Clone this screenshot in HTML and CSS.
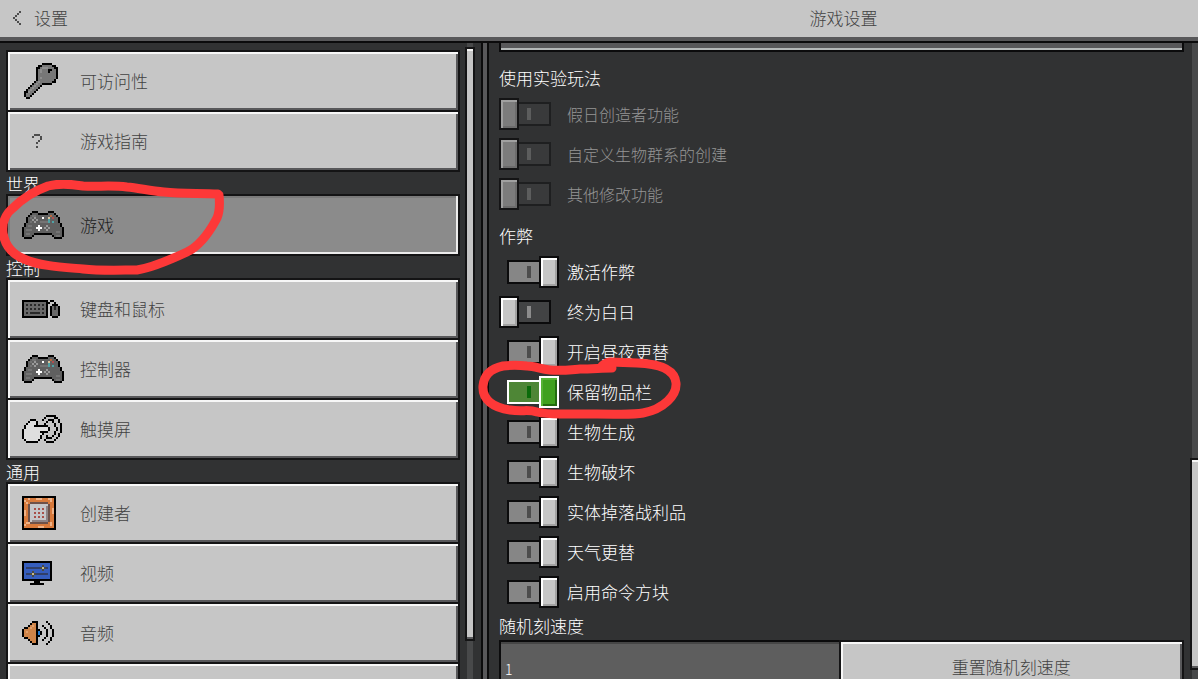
FILE: index.html
```html
<!DOCTYPE html>
<html lang="zh-CN">
<head>
<meta charset="utf-8">
<meta name="viewport" content="width=device-width, initial-scale=1">
<title>游戏设置</title>
<link rel="stylesheet" href="styles.css">
</head>
<body>
<svg class="symbols" aria-hidden="true">
  <symbol id="pad" viewBox="0 -0.5 21 14">
    <path stroke="#606060" d="M5 1h3M13 1h3M4 2h13M3 3h15M3 4h15M3 5h15M2 6h17M2 7h17M1 8h19M1 9h19M1 10h19M1 11h5M15 11h5M1 12h4M16 12h4"/>
    <path stroke="#747474" d="M5 2h2M4 3h1M4 5h1M3 7h2M2 9h3M2 11h2M17 10h2M17 12h2M9 5h4"/>
    <path stroke="#000" d="M5 0h3M13 0h3M4 1h1M8 1h5M16 1h1M3 2h1M17 2h1M2 3h1M18 3h1M2 4h1M18 4h1M2 5h1M18 5h1M1 6h1M19 6h1M1 7h1M19 7h1M0 8h1M20 8h1M0 9h1M20 9h1M0 10h1M20 10h1M0 11h1M6 11h9M20 11h1M0 12h1M5 12h1M15 12h1M20 12h1M1 13h4M16 13h4"/>
    <path stroke="#9a9a9a" d="M6 3h1M5 4h1M7 4h1M6 5h1M12 7h1M11 8h1M13 8h1M12 9h1"/>
    <path stroke="#fff" d="M10 3h1M8 7h1M7 8h3M8 9h1"/>
    <path stroke="#d9c39a" d="M13 3h1"/><path stroke="#b7683e" d="M14 2h1"/><path stroke="#4fa3a6" d="M13 4h1M15 5h1M13 5h1"/><path stroke="#b34c4c" d="M15 3h1"/>
  </symbol>
</svg>

<header class="topbar">
  <button class="back" type="button">
    <svg class="pixel" width="10" height="14" viewBox="0 -0.5 5 7" aria-hidden="true"><path stroke="#4c4c4c" d="M3 0h1M2 1h1M1 2h1M0 3h1M1 4h1M2 5h1M3 6h1"/></svg>
    <span>设置</span>
  </button>
  <h1 class="title">游戏设置</h1>
</header>

<main class="screen">
  <div class="side">
    <nav class="menu" aria-label="设置">
      <button class="item" type="button"><span class="icon"><svg class="pixel" width="38" height="36" viewBox="-1 -0.5 19 18">
        <path stroke="#777" d="M9 1h5M8 2h7M7 3h9M7 4h9M7 5h9M7 6h9M7 7h9M7 8h8M6 9h8M5 10h4M4 11h4M3 12h4M2 13h4M2 14h3M1 15h3M1 16h2"/>
        <path stroke="#8e8e8e" d="M9 2h3M8 3h1M8 4h1M8 7h1M7 9h1M6 10h1M5 11h1M4 12h1M3 13h1M2 14h1"/>
        <path stroke="#000" d="M9 0h5M7 1h2M14 1h2M6 2h2M15 2h2M6 3h1M12 3h2M16 3h1M6 4h1M12 4h1M16 4h1M6 5h1M16 5h1M6 6h1M16 6h1M6 7h1M16 7h1M6 8h1M15 8h1M5 9h1M14 9h2M4 10h1M9 10h5M3 11h1M8 11h1M2 12h1M7 12h1M1 13h1M6 13h1M0 14h2M5 14h1M0 15h1M4 15h1M0 16h1M3 16h1M1 17h2"/>
      </svg></span>可访问性</button>
      <button class="item" type="button"><span class="icon"><svg class="pixel mark" width="10" height="14" viewBox="0 -0.5 5 7"><path stroke="#4c4c4c" d="M1 0h3M0 1h1M4 1h1M4 2h1M3 3h1M2 4h1M2 6h1"/></svg></span>游戏指南</button>
      <h2 class="group">世界</h2>
      <button class="item selected" type="button" aria-current="page"><span class="icon"><svg class="pixel" width="42" height="28"><use href="#pad"/></svg></span>游戏
        <svg class="ink ink-menu" width="230" height="100" viewBox="0 180 230 100" aria-hidden="true"><path d="M218 194C200 193 182 194 164 192C150 191 139 188 127 187C110 185 98 187 83 186C70 184 60 183 48 186C34 191 22 199 13 208C5 214 2 224 3 233C5 246 12 254 24 259C40 266 60 267 83 269C101 271 122 270 137 270C151 268 172 259 187 252C205 243 214 223 217 218C220 211 220 205 219 195"/></svg>
      </button>
      <h2 class="group">控制</h2>
      <button class="item" type="button"><span class="icon"><svg class="pixel" width="38" height="18" viewBox="0 -0.5 19 9">
        <path stroke="#696969" d="M1 1h11M1 2h11M1 3h11M1 4h11M1 5h11M1 6h11M1 7h11M15 3h3M15 4h3M15 5h3M15 6h3M15 7h3"/>
        <path stroke="#292929" d="M2 2h1M4 2h1M6 2h1M8 2h1M10 2h1M2 4h1M4 4h1M6 4h1M8 4h1M10 4h1M2 6h1M4 6h5M10 6h1M16 3h1M16 4h1"/>
        <path stroke="#000" d="M0 0h13M14 0h2M0 1h1M12 1h2M16 1h1M0 2h1M12 2h1M15 2h3M0 3h1M12 3h1M14 3h1M18 3h1M0 4h1M12 4h1M14 4h1M18 4h1M0 5h1M12 5h1M14 5h1M18 5h1M0 6h1M12 6h1M14 6h1M18 6h1M0 7h1M12 7h1M14 7h1M18 7h1M0 8h13M15 8h3"/>
      </svg></span>键盘和鼠标</button>
      <button class="item" type="button"><span class="icon"><svg class="pixel" width="42" height="28"><use href="#pad"/></svg></span>控制器</button>
      <button class="item" type="button"><span class="icon"><svg class="pixel" width="40" height="28" viewBox="0 -0.5 20 14">
        <path stroke="#dedede" d="M4 3h3M3 4h4M2 5h5M2 6h11M1 7h12M1 8h9M1 9h9M1 10h8M1 11h8M2 12h6"/>
        <path stroke="#000" d="M12 0h5M11 1h1M16 1h2M4 2h3M10 2h1M13 2h3M18 2h1M3 3h1M7 3h1M12 3h1M15 3h1M18 3h1M2 4h1M7 4h1M11 4h1M16 4h1M19 4h1M1 5h1M6 5h7M16 5h1M19 5h1M1 6h1M13 6h1M17 6h1M19 6h1M0 7h1M13 7h1M17 7h1M19 7h1M0 8h1M9 8h4M16 8h1M19 8h1M0 9h1M10 9h1M16 9h1M18 9h1M0 10h1M9 10h1M12 10h1M15 10h1M18 10h1M0 11h1M9 11h1M12 11h3M17 11h1M1 12h1M8 12h1M11 12h1M16 12h1M2 13h6M12 13h4"/>
      </svg></span>触摸屏</button>
      <h2 class="group">通用</h2>
      <button class="item" type="button"><span class="icon"><svg class="pixel" width="34" height="34" viewBox="0 0 17 17">
        <path fill="#000" d="M0 0h17v17H0z"/><path fill="#d87a3c" d="M1 1h15v15H1z"/>
        <path fill="#efb287" d="M1 2h1v1H1zM2 3h1v1H2zM3 1h1v1H3zM13 1h2v1h-2zM14 2h1v1h-1zM7 1h3v1H7zM1 7h1v3H1zM2 13h2v1H2zM1 14h1v1H1zM14 13h1v2h-1zM8 15h3v1H8zM15 6h1v3h-1z"/>
        <path fill="#6e5149" d="M4 3h9v1H4zM3 4h1v9H3zM13 4h1v9h-1zM4 13h9v1H4z"/><path fill="#c6c6c9" d="M4 4h9v9H4z"/><path fill="#8d8386" d="M12 5h1v8H5v-1h7z"/>
        <path fill="#a84f49" d="M6 6h1v1H6zM8 6h1v1H8zM10 6h1v1h-1zM6 8h1v1H6zM8 8h1v1H8zM10 8h1v1h-1zM6 10h1v1H6zM8 10h1v1H8zM10 10h1v1h-1z"/>
      </svg></span>创建者</button>
      <button class="item" type="button"><span class="icon"><svg class="pixel" width="30" height="24" viewBox="0 0 15 12">
        <path fill="#000" d="M0 0h15v10H0zM6 10h3v1H6zM4 11h7v1H4z"/><path fill="#355dbd" d="M1 1h13v8H1z"/>
        <path fill="#303f69" d="M2 3h11v1H2zM2 6h11v1H2z"/><path fill="#4a4a42" d="M10 2h1v3h-1zM9 3h3v1H9zM5 5h1v3H5zM4 6h3v1H4z"/><path fill="#c3ba92" d="M10 3h1v1h-1zM5 6h1v1H5z"/>
      </svg></span>视频</button>
      <button class="item" type="button"><span class="icon"><svg class="pixel" width="32" height="24" viewBox="0 -0.5 16 12">
        <path stroke="#cf8448" d="M5 1h2M4 2h3M3 3h4M1 4h6M1 5h6M1 6h6M1 7h6M3 8h4M4 9h3M5 10h2"/><path stroke="#e0a06c" d="M5 2h1M4 3h1M2 5h1"/>
        <path stroke="#247bd0" d="M8 5h1M8 6h1"/>
        <path stroke="#000" d="M5 0h3M12 0h1M4 1h1M7 1h1M13 1h1M3 2h1M7 2h1M10 2h1M14 2h1M1 3h2M7 3h1M11 3h1M14 3h1M0 4h1M7 4h2M12 4h1M15 4h1M0 5h1M7 5h1M9 5h1M12 5h1M15 5h1M0 6h1M7 6h1M9 6h1M12 6h1M15 6h1M0 7h1M7 7h2M12 7h1M15 7h1M1 8h2M7 8h1M11 8h1M14 8h1M3 9h1M7 9h1M10 9h1M14 9h1M4 10h1M7 10h1M13 10h1M5 11h3M12 11h1"/>
      </svg></span>音频</button>
      <button class="item" type="button" aria-label="更多"></button>
    </nav>
    <div class="scroll"><div class="thumb"></div></div>
  </div>
  <div class="divider"></div>
  <div class="panel">
    <section class="options">
      <div class="clipped"></div>
      <h2 class="heading">使用实验玩法</h2>
      <label class="row off"><input class="toggle" type="checkbox" disabled>假日创造者功能</label>
      <label class="row off"><input class="toggle" type="checkbox" disabled>自定义生物群系的创建</label>
      <label class="row off"><input class="toggle" type="checkbox" disabled>其他修改功能</label>
      <h2 class="heading">作弊</h2>
      <label class="row"><input class="toggle" type="checkbox" checked>激活作弊</label>
      <label class="row"><input class="toggle" type="checkbox">终为白日</label>
      <label class="row"><input class="toggle" type="checkbox" checked>开启昼夜更替</label>
      <label class="row"><input class="toggle active" type="checkbox" checked>保留物品栏
        <svg class="ink ink-row" width="215" height="70" viewBox="475 355 215 70" aria-hidden="true"><path d="M612 368C602 368 592 369 580 369C568 370 560 371 550 370C540 369 535 366 527 366C518 365 511 365 503 366C489 369 484 376 483 386C482 400 494 408 510 410C523 412 528 409 537 412C545 414 552 414 560 414L597 414C620 414 633 415 643 413C664 409 677 395 676 383C675 371 663 364 637 363L610 362Q605 363 602 366"/></svg>
      </label>
      <label class="row"><input class="toggle" type="checkbox" checked>生物生成</label>
      <label class="row"><input class="toggle" type="checkbox" checked>生物破坏</label>
      <label class="row"><input class="toggle" type="checkbox" checked>实体掉落战利品</label>
      <label class="row"><input class="toggle" type="checkbox" checked>天气更替</label>
      <label class="row"><input class="toggle" type="checkbox" checked>启用命令方块</label>
      <h2 class="heading tight"><label for="tick">随机刻速度</label></h2>
      <div class="field">
        <input class="entry" id="tick" type="text" value="1">
        <button class="reset" type="button">重置随机刻速度</button>
      </div>
    </section>
    <div class="scroll scroll-right"><div class="thumb"></div></div>
  </div>
</main>
</body>
</html>
```
FILE: styles.css
```css
*,
*::before,
*::after {
  box-sizing: border-box;
}

body {
  margin: 0;
  height: 100vh;
  display: flex;
  flex-direction: column;
  overflow: hidden;
  background: #313233;
  color: #fff;
  font: 300 17px/24px "Noto Sans CJK SC", sans-serif;
}

button,
input {
  font: inherit;
  border-radius: 0;
  margin: 0;
}

h1,
h2 {
  margin: 0;
  font: inherit;
}

.symbols {
  position: absolute;
  width: 0;
  height: 0;
}

.pixel {
  display: block;
  shape-rendering: crispEdges;
}

.topbar,
.screen {
  display: grid;
  grid-template-columns: minmax(0, 481fr) 8px minmax(0, 709fr);
}

.topbar {
  flex: none;
  height: 43px;
  padding-bottom: 6px;
  align-items: center;
  background: #c6c6c6;
  color: #424242;
  border-bottom: 2px solid #0b0b0c;
  box-shadow: inset 0 -4px #58585a;
}

.back {
  display: flex;
  align-items: center;
  gap: 11px;
  padding: 0 13px;
  border: 0;
  background: none;
  color: inherit;
}

.title {
  grid-column: 3;
  text-align: center;
}

.screen {
  flex: 1;
  min-height: 0;
  grid-template-rows: minmax(0, 1fr);
  overflow: hidden;
}

.side {
  display: flex;
  padding: 0 6px;
  gap: 5px;
}

.menu {
  flex: 1;
  min-width: 0;
  display: flex;
  flex-direction: column;
  padding-top: 9px;
}

.item {
  position: relative;
  flex: none;
  display: flex;
  align-items: center;
  height: 62px;
  margin-top: -2px;
  padding: 0 14px;
  border: 2px solid #141415;
  background: #c6c6c6;
  box-shadow: inset 2px 2px #f7f7f7, inset -2px -2px #58585a;
  color: #424242;
}

.selected {
  background: #8b8b8b;
  box-shadow: inset -2px -2px #ececec, inset 2px 2px #7b7b7b;
  color: #1c1c1c;
}

.icon {
  flex: none;
  width: 58px;
}

.mark {
  margin-left: 10px;
}

.group {
  flex: none;
}

.scroll {
  flex: none;
  width: 10px;
  padding-top: 4px;
  background: linear-gradient(#48494a, #48494a) center / 6px 100% no-repeat;
}

.thumb {
  height: 94%;
  border: 2px solid #141415;
  background: #c6c6c6;
  box-shadow: inset 0 2px #f7f7f7, inset 0 -2px #58585a;
}

.divider {
  background: #58585a;
  border: solid #0b0b0c;
  border-width: 0 2px;
}

.panel {
  display: flex;
  gap: 6px;
  padding-left: 10px;
}

.options {
  flex: 1;
  min-width: 0;
}

.clipped {
  height: 9px;
  margin-bottom: 4px;
  border: 2px solid #0b0b0c;
  border-top: 0;
  background: #58585a;
  box-shadow: inset 0 -2px #b4b8b8;
}

.heading {
  padding-top: 6px;
  line-height: 32px;
}

.tight {
  padding-top: 0;
  line-height: 28px;
}

.row {
  position: relative;
  display: flex;
  align-items: center;
  gap: 8px;
  height: 40px;
}

.off {
  color: #959595;
  font-size: 16px;
}

.toggle {
  appearance: none;
  flex: none;
  display: grid;
  align-items: center;
  width: 60px;
  height: 32px;
}

.toggle::before,
.toggle::after {
  content: "";
  grid-area: 1 / 1;
  border: 2px solid #0b0b0c;
}

.toggle::before {
  justify-self: center;
  width: 44px;
  height: 24px;
  background: linear-gradient(#8c8c8c, #8c8c8c) center / 4px 12px no-repeat #424344;
}

.toggle::after {
  justify-self: start;
  width: 20px;
  height: 32px;
  background: #c6c6c6;
  box-shadow: inset 2px 2px #fff, inset -2px -2px #a2a2a2;
}

.toggle:checked::before {
  background: linear-gradient(#4c4c4c, #4c4c4c) center / 4px 12px no-repeat #868686;
}

.toggle:checked::after {
  justify-self: end;
}

.toggle:disabled::before {
  border-color: #1e1f20;
  background: linear-gradient(#5c5d5d, #5c5d5d) center / 4px 12px no-repeat #393a3b;
}

.toggle:disabled::after {
  border-color: #141415;
  background: #7c7c7c;
  box-shadow: inset 2px 2px #a0a0a0, inset -2px -2px #6c6c6c;
}

.toggle.active::before {
  border-color: #fff;
  background: linear-gradient(#0a6b0a, #0a6b0a) center / 4px 12px no-repeat #4e8636;
}

.toggle.active::after {
  border-color: #fff;
  background: #3fa01e;
  box-shadow: inset 2px 2px #55b234, inset -2px -2px #236b10;
}

.field {
  display: flex;
  align-items: flex-start;
}

.entry,
.reset {
  flex: 1;
  min-width: 0;
}

.entry {
  height: 58px;
  padding: 0 4px;
  border: 2px solid #0b0b0c;
  border-right: 0;
  background: #5e5e5e;
  box-shadow: inset 0 2px #464646;
  color: #fff;
  font-size: 14px;
}

.reset {
  height: 54px;
  border: 2px solid #141415;
  background: #c6c6c6;
  box-shadow: inset 2px 2px #f7f7f7, inset -2px 0 #58585a;
  color: #424242;
  line-height: 20px;
}

.scroll-right {
  width: 8px;
  background: linear-gradient(#48494a, #48494a) right top / 6px 100% no-repeat;
}

.scroll-right .thumb {
  height: 212px;
  margin-top: 411px;
  border-right: 0;
}

.ink {
  position: absolute;
  z-index: 1;
  pointer-events: none;
  fill: none;
  stroke: #fd3838;
  stroke-width: 9;
  stroke-linecap: round;
  stroke-linejoin: round;
}

.ink-menu {
  left: -8px;
  top: -16px;
}

.ink-row {
  left: -24px;
  top: -17px;
}
```
